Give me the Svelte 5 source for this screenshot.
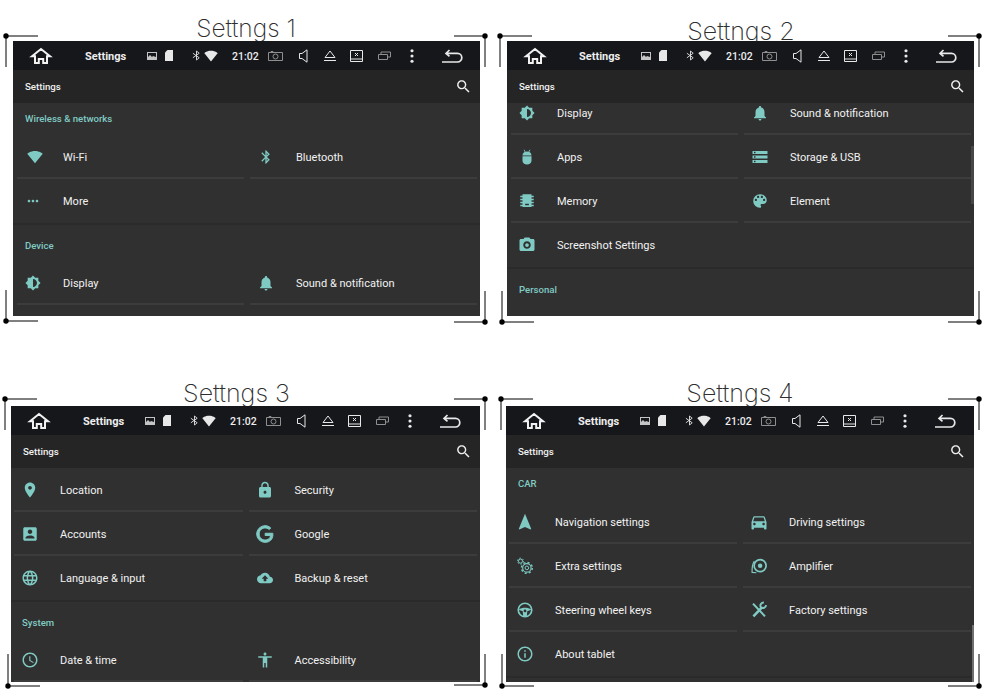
<script>
  const fills = {
    wifi: 'M12.01 21.49L23.64 7c-.45-.34-4.93-4-11.64-4C5.28 3 .81 6.66.36 7l11.63 14.49.01.01.01-.01z',
    bluetooth: 'M17.71 7.71L12 2h-1v7.59L6.41 5 5 6.41 10.59 12 5 17.59 6.41 19 11 14.41V22h1l5.71-5.71-4.3-4.29 4.3-4.29zM13 5.83l1.88 1.88L13 9.59V5.83zm1.88 10.46L13 18.17v-3.76l1.88 1.88z',
    more: 'M6 10c-1.1 0-2 .9-2 2s.9 2 2 2 2-.9 2-2-.9-2-2-2zm12 0c-1.1 0-2 .9-2 2s.9 2 2 2 2-.9 2-2-.9-2-2-2zm-6 0c-1.1 0-2 .9-2 2s.9 2 2 2 2-.9 2-2-.9-2-2-2z',
    display: 'M20 15.31L23.31 12 20 8.69V4h-4.69L12 .69 8.69 4H4v4.69L.69 12 4 15.31V20h4.69L12 23.31 15.31 20H20v-4.69zM12 18V6c3.31 0 6 2.69 6 6s-2.69 6-6 6z',
    bell: 'M12 22c1.1 0 2-.9 2-2h-4c0 1.1.89 2 2 2zm6-6v-5c0-3.07-1.64-5.64-4.5-6.32V4c0-.83-.67-1.5-1.5-1.5s-1.5.67-1.5 1.5v.68C7.63 5.36 6 7.92 6 11v5l-2 2v1h16v-1l-2-2z',
    android: 'M6 11h12v6a6 5 0 0 1-12 0zM6 10a6 5.5 0 0 1 12 0zM7.4 2.2l1 0 1.6 2.6-1 .5zM16.6 2.2l-1 0-1.6 2.6 1 .5z',
    storage: 'M2 20h20v-4H2v4zm2-3h2v2H4v-2zM2 4v4h20V4H2zm4 3H4V5h2v2zm-4 7h20v-4H2v4zm2-3h2v2H4v-2z',
    memory: 'M6 3h12v2h3v2h-3v2h3v2h-3v2h3v2h-3v2h3v2h-3v1H6v-1H3v-2h3v-2H3v-2h3v-2H3V9h3V7H3V5h3zM9.5 15.5v2h5v-2z',
    palette: 'M12 3c-4.97 0-9 4.03-9 9s4.03 9 9 9c.83 0 1.5-.67 1.5-1.5 0-.39-.15-.74-.39-1.01-.23-.26-.38-.61-.38-.99 0-.83.67-1.5 1.5-1.5H16c2.76 0 5-2.24 5-5 0-4.42-4.03-8-9-8zm-5.5 9c-.83 0-1.5-.67-1.5-1.5S5.67 9 6.5 9 8 9.67 8 10.5 7.33 12 6.5 12zm3-4C8.67 8 8 7.33 8 6.5S8.67 5 9.5 5s1.5.67 1.5 1.5S10.33 8 9.5 8zm5 0c-.83 0-1.5-.67-1.5-1.5S13.67 5 14.5 5s1.5.67 1.5 1.5S15.33 8 14.5 8zm3 4c-.83 0-1.5-.67-1.5-1.5S16.67 9 17.5 9s1.5.67 1.5 1.5-.67 1.5-1.5 1.5z',
    camera: 'M9 2L7.17 4H4c-1.1 0-2 .9-2 2v12c0 1.1.9 2 2 2h16c1.1 0 2-.9 2-2V6c0-1.1-.9-2-2-2h-3.17L15 2H9zm3 15c-2.76 0-5-2.24-5-5s2.24-5 5-5 5 2.24 5 5-2.24 5-5 5zM12 9.5a2.5 2.5 0 1 0 0 5 2.5 2.5 0 0 0 0-5z',
    place: 'M12 2C8.13 2 5 5.13 5 9c0 5.25 7 13 7 13s7-7.75 7-13c0-3.87-3.13-7-7-7zm0 9.5c-1.38 0-2.5-1.12-2.5-2.5s1.12-2.5 2.5-2.5 2.5 1.12 2.5 2.5-1.12 2.5-2.5 2.5z',
    lock: 'M18 8h-1V6c0-2.76-2.24-5-5-5S7 3.24 7 6v2H6c-1.1 0-2 .9-2 2v10c0 1.1.9 2 2 2h12c1.1 0 2-.9 2-2V10c0-1.1-.9-2-2-2zm-6 9c-1.1 0-2-.9-2-2s.9-2 2-2 2 .9 2 2-.9 2-2 2zm3.1-9H8.9V6c0-1.71 1.39-3.1 3.1-3.1 1.71 0 3.1 1.39 3.1 3.1v2z',
    account: 'M3 5v14c0 1.1.89 2 2 2h14c1.1 0 2-.9 2-2V5c0-1.1-.9-2-2-2H5c-1.11 0-2 .9-2 2zm12 4c0 1.66-1.34 3-3 3s-3-1.34-3-3 1.34-3 3-3 3 1.34 3 3zm-9 8c0-2 4-3.1 6-3.1s6 1.1 6 3.1v1H6v-1z',
    google: 'M21.35 11.1h-9.17v2.73h6.51c-.33 3.81-3.5 5.44-6.5 5.44C8.36 19.27 5 16.25 5 12c0-4.1 3.2-7.27 7.2-7.27 3.09 0 4.9 1.97 4.9 1.97L19 4.72S16.56 2 12.1 2C6.42 2 2.03 6.8 2.03 12c0 5.05 4.13 10 10.22 10 5.35 0 9.25-3.67 9.25-9.09 0-1.15-.15-1.81-.15-1.81z',
    globe: 'M11.99 2C6.47 2 2 6.48 2 12s4.47 10 9.99 10C17.52 22 22 17.52 22 12S17.52 2 11.99 2zm6.93 6h-2.95c-.32-1.25-.78-2.45-1.38-3.56 1.84.63 3.37 1.91 4.33 3.56zM12 4.04c.83 1.2 1.48 2.53 1.91 3.96h-3.82c.43-1.43 1.08-2.76 1.91-3.96zM4.26 14C4.1 13.36 4 12.69 4 12s.1-1.36.26-2h3.38c-.08.66-.14 1.32-.14 2 0 .68.06 1.34.14 2H4.26zm.82 2h2.95c.32 1.25.78 2.45 1.38 3.56-1.84-.63-3.37-1.9-4.33-3.56zm2.95-8H5.08c.96-1.66 2.49-2.93 4.33-3.56C8.81 5.55 8.35 6.75 8.03 8zM12 19.96c-.83-1.2-1.48-2.53-1.91-3.96h3.82c-.43 1.43-1.08 2.76-1.91 3.96zM14.34 14H9.66c-.09-.66-.16-1.32-.16-2 0-.68.07-1.35.16-2h4.68c.09.65.16 1.32.16 2 0 .68-.07 1.34-.16 2zm.25 5.56c.6-1.11 1.06-2.31 1.38-3.56h2.95c-.96 1.65-2.49 2.93-4.33 3.56zM16.36 14c.08-.66.14-1.32.14-2 0-.68-.06-1.34-.14-2h3.38c.16.64.26 1.31.26 2s-.1 1.36-.26 2h-3.38z',
    cloud: 'M19.35 10.04C18.67 6.59 15.64 4 12 4 9.11 4 6.6 5.64 5.35 8.04 2.34 8.36 0 10.91 0 14c0 3.31 2.69 6 6 6h13c2.76 0 5-2.24 5-5 0-2.64-2.05-4.78-4.65-4.96zM14 13v4h-4v-4H7l5-5 5 5h-3z',
    clock: 'M11.99 2C6.47 2 2 6.48 2 12s4.47 10 9.99 10C17.52 22 22 17.52 22 12S17.52 2 11.99 2zM12 20c-4.42 0-8-3.58-8-8s3.58-8 8-8 8 3.58 8 8-3.58 8-8 8zM12.5 7H11v6l5.25 3.15.75-1.23-4.5-2.67z',
    person: 'M12 2c1.1 0 2 .9 2 2s-.9 2-2 2-2-.9-2-2 .9-2 2-2zm9 7h-6v13h-2v-6h-2v6H9V9H3V7h18v2z',
    nav: 'M12 2L4.5 20.29l.71.71L12 18l6.79 3 .71-.71z',
    car: 'M18.92 6.01C18.72 5.42 18.16 5 17.5 5h-11c-.66 0-1.21.42-1.42 1.01L3 12v8c0 .55.45 1 1 1h1c.55 0 1-.45 1-1v-1h12v1c0 .55.45 1 1 1h1c.55 0 1-.45 1-1v-8l-2.08-5.99zM6.5 16c-.83 0-1.5-.67-1.5-1.5S5.67 13 6.5 13s1.5.67 1.5 1.5S7.33 16 6.5 16zm11 0c-.83 0-1.5-.67-1.5-1.5s.67-1.5 1.5-1.5 1.5.67 1.5 1.5-.67 1.5-1.5 1.5zM5 11l1.5-4.5h11L19 11H5z',
    info: 'M11 17h2v-6h-2v6zm1-15C6.48 2 2 6.48 2 12s4.48 10 10 10 10-4.48 10-10S17.52 2 12 2zm0 18c-4.41 0-8-3.59-8-8s3.59-8 8-8 8 3.59 8 8-3.59 8-8 8zM11 9h2V7h-2v2z'
  };

  const small = ['wifi', 'bluetooth', 'more', 'display', 'cloud'];
  const large = ['nav', 'car', 'google'];
  const sizeOf = (n) => (small.includes(n) ? 'sm' : large.includes(n) ? 'lg' : '');

  const shots = [
    { id: 'a', title: 'Settngs 1', sections: [
      { head: 'Wireless & networks', first: true, rows: [['wifi', 'Wi-Fi'], ['bluetooth', 'Bluetooth'], ['more', 'More'], null] },
      { head: 'Device', open: true, rows: [['display', 'Display'], ['bell', 'Sound & notification']] }
    ] },
    { id: 'b', title: 'Settngs 2', sections: [
      { rows: [['display', 'Display'], ['bell', 'Sound & notification'], ['android', 'Apps'], ['storage', 'Storage & USB'], ['memory', 'Memory'], ['palette', 'Element'], ['camera', 'Screenshot Settings'], null] },
      { head: 'Personal', open: true, rows: [] }
    ] },
    { id: 'c', title: 'Settngs 3', sections: [
      { rows: [['place', 'Location'], ['lock', 'Security'], ['account', 'Accounts'], ['google', 'Google'], ['globe', 'Language & input'], ['cloud', 'Backup & reset']] },
      { head: 'System', open: true, rows: [['clock', 'Date & time'], ['person', 'Accessibility']] }
    ] },
    { id: 'd', title: 'Settngs 4', sections: [
      { head: 'CAR', first: true, rows: [['nav', 'Navigation settings'], ['car', 'Driving settings'], ['gears', 'Extra settings'], ['amp', 'Amplifier'], ['wheel', 'Steering wheel keys'], ['tools', 'Factory settings'], ['info', 'About tablet'], null] }
    ] }
  ];

  const lastRowStart = (s) => s.open ? s.rows.length : s.rows.length - 2;

  const marks = [
    [6, 36, 38, 67], [485, 36, 454, 67], [6, 321, 38, 290], [485, 322, 454, 291],
    [500, 36, 532, 67], [979, 36, 948, 67], [502, 322, 534, 291], [979, 322, 948, 291],
    [5, 399, 37, 430], [485, 399, 454, 430], [8, 686, 40, 654], [485, 685, 454, 654],
    [501, 399, 533, 430], [979, 399, 948, 430], [502, 686, 534, 654], [979, 686, 948, 654]
  ];
</script>

{#snippet icon(name)}
  <svg class="ic {sizeOf(name)} {name}" viewBox="0 0 24 24">
    {#if fills[name]}
      <path d={fills[name]} fill-rule="evenodd" />
    {:else if name === 'gears'}
      <g class="st">
        <circle cx="14.5" cy="14.5" r="5.6" stroke-width="1.5" />
        <circle cx="14.5" cy="14.5" r="2.4" stroke-width="1.3" />
        <circle cx="14.5" cy="14.5" r="7.2" stroke-width="1.9" stroke-dasharray="2.8 2.85" />
        <circle cx="6" cy="5.5" r="2.7" stroke-width="1.3" />
        <circle cx="6" cy="5.5" r="4" stroke-width="1.3" stroke-dasharray="2 2.2" />
      </g>
    {:else if name === 'amp'}
      <g class="st">
        <circle cx="13.5" cy="11.5" r="8" stroke-width="2.3" />
        <circle cx="13.5" cy="11.5" r="3" stroke-width="0" class="solid" />
        <path d="M5.8 5.5C2.8 10 2.6 15 2.8 20.5L8.5 21" stroke-width="1.6" />
      </g>
    {:else if name === 'wheel'}
      <g class="st">
        <circle cx="12" cy="12" r="9" stroke-width="2.2" />
        <path d="M3.5 11.5C8 8 16 8 20.5 11.5L15 13.5 14.5 20h-5L9 13.5z" class="solid" stroke-width="0" />
        <circle cx="12" cy="13.2" r="1.9" class="hole" stroke-width="0" />
      </g>
    {:else if name === 'tools'}
      <g class="st">
        <path d="M4 3.5L20 20.5" stroke-width="2.8" />
        <path d="M16 8.5L4.5 20.5" stroke-width="3.4" />
        <path d="M21.5 5.5a4.4 4.4 0 0 1-7 3 4.4 4.4 0 0 1 4-6.6" stroke-width="2.6" />
      </g>
    {/if}
  </svg>
{/snippet}

{#snippet statusbar()}
  <div class="bar">
    <svg class="home" viewBox="0 0 20 16"><path d="M1 8.2L10 1l9 7.2h-3V15h-3.8v-4H7.8v4H4V8.2z" /></svg>
    <span class="bar-title">Settings</span>
    <svg class="pic" viewBox="0 0 10 10"><path class="fl soft" fill-rule="evenodd" d="M0 1h10v8H0zM1 2v4l2-2 2 2 1-1 3 1V2z" /></svg>
    <svg class="sd" viewBox="0 0 8 11"><path class="fl" d="M2.5 0H8v11H0V2.5z" /></svg>
    <svg class="bt" viewBox="0 0 10 12"><path class="ln" d="M1 3.5L8 8.5 5 11V1L8 3.5 1 8.5" /></svg>
    <svg class="wifi" viewBox="0 0 24 24"><path class="fl" d={fills.wifi} /></svg>
    <span class="time">21:02</span>
    <svg class="cam" viewBox="0 0 15 10"><path class="ln dim" d="M.5 1.5h14v8H.5zM3 1.5v-1h2v1" /><circle class="ln dim" cx="7.5" cy="5.5" r="2.5" /></svg>
    <svg class="speaker" viewBox="0 0 9 14"><path class="ln" d="M.5 4.5H3L8 .8v12.4L3 9.5H.5z" /></svg>
    <svg class="eject" viewBox="0 0 12 12"><path class="ln" d="M6 1l5 6.5H1z" /><path class="ln" d="M0 10.5h12" /></svg>
    <svg class="xbox" viewBox="0 0 13 12"><path class="ln" d="M.5.5h12v11H.5zM.5 9h12M5 3l3 3M8 3L5 6" /></svg>
    <svg class="win" viewBox="0 0 13 9"><path class="ln dim" d="M.5 3.5h9v5h-9zM3 3.5V1h9.5v5H9.5" /></svg>
    <svg class="dots" viewBox="0 0 4 16"><circle class="fl" cx="2" cy="2" r="1.8" /><circle class="fl" cx="2" cy="8" r="1.8" /><circle class="fl" cx="2" cy="14" r="1.8" /></svg>
    <svg class="back" viewBox="0 0 20 14"><path class="ln thick" d="M0 13h15.5a4.2 4.2 0 0 0 0-8.6H4M7.5 1L4 4.4l3.5 3" /></svg>
  </div>
{/snippet}

<div class="page">
  {#each shots as s}
    <section class="shot {s.id}">
      <h2>{s.title}</h2>
      <div class="screen">
        {@render statusbar()}
        <div class="appbar">
          <span>Settings</span>
          <svg viewBox="0 0 24 24"><path d="M15.5 14h-.79l-.28-.27C15.41 12.59 16 11.11 16 9.5 16 5.91 13.09 3 9.5 3S3 5.91 3 9.5 5.91 16 9.5 16c1.61 0 3.09-.59 4.23-1.57l.27.28v.79l5 4.99L20.49 19l-4.99-5zm-6 0C7.01 14 5 11.99 5 9.5S7.01 5 9.5 5 14 7.01 14 9.5 11.99 14 9.5 14z" /></svg>
        </div>
        <div class="content">
          {#each s.sections as sec}
            <div class="sec" class:open={sec.open}>
              {#if sec.head}<div class="head" class:first={sec.first}>{sec.head}</div>{/if}
              {#if sec.rows.length}
                <div class="cells">
                  {#each sec.rows as cell, i}
                    <div class="cell" class:last={i >= lastRowStart(sec)}>
                      {#if cell}
                        <span class="slot">{@render icon(cell[0])}</span>
                        <span class="label">{cell[1]}</span>
                      {/if}
                    </div>
                  {/each}
                </div>
              {/if}
            </div>
          {/each}
        </div>
        <div class="thumb"></div>
      </div>
    </section>
  {/each}

  <svg class="marks" viewBox="0 0 990 698">
    {#each marks as [x, y, hx, vy]}
      <path d="M{x} {y}H{hx}M{x} {y}V{vy}" />
      <circle cx={x} cy={y} r="2.7" />
    {/each}
  </svg>
</div>

<style>
  :global(body) { margin: 0; background: #fff; }
  .page {
    position: relative;
    width: 990px;
    height: 698px;
    display: grid;
    grid-template-columns: 495px 495px;
    grid-template-rows: 365px 333px;
    overflow: hidden;
    font-family: Roboto, "Liberation Sans", sans-serif;
  }
  .shot { min-width: 0; }
  h2 {
    margin: 0;
    height: 41px;
    box-sizing: border-box;
    padding-top: 13px;
    font: 200 25px/30px Inter, "Liberation Sans", sans-serif;
    color: #2e2e2e;
    text-align: center;
    white-space: nowrap;
  }
  .a h2 { font-size: 24.5px; margin-right: 3px; }
  .b h2 { padding-top: 16px; margin-left: -3px; }
  .c h2 { margin-right: 22px; }
  .d h2 { margin-left: -5px; }

  .screen {
    position: relative;
    margin-left: 13px;
    width: 467px;
    height: 275px;
    background: #303030;
    overflow: hidden;
    display: flex;
    flex-direction: column;
    --pad: 4px;
    --gap: 6px;
  }
  .b .screen { margin-left: 12px; }
  .c .screen { margin-left: 11px; width: 469px; height: 276px; --pad: 3px; --gap: 6px; }
  .d .screen { margin-left: 11px; width: 468px; height: 276px; --pad: 3px; }

  .bar {
    flex: none;
    height: 29px;
    background: #15171b;
    display: flex;
    align-items: center;
    color: #eee;
  }
  .bar svg { flex: none; display: block; overflow: visible; }
  .fl { fill: #e8e8e8; }
  .fl.soft { fill: #c4c4c4; }
  .ln { fill: none; stroke: #e8e8e8; stroke-width: 1; }
  .ln.dim { stroke: #8f8f8f; }
  .ln.thick { stroke-width: 1.7; }
  .home { margin-left: 18px; width: 20px; height: 16px; fill: none; stroke: #f2f2f2; stroke-width: 2; }
  .bar-title { margin-left: 34px; width: 41px; padding-top: 1px; font-size: 11px; font-weight: 700; white-space: nowrap; }
  .pic { margin-left: 21px; width: 10px; height: 10px; }
  .sd { margin-left: 8px; width: 8px; height: 11px; }
  .bt { margin-left: 19px; width: 9px; height: 11px; }
  .wifi { margin-left: 3px; width: 14px; height: 14px; }
  .time { margin-left: 14px; width: 23px; padding-top: 1px; font-size: 10.5px; font-weight: 500; white-space: nowrap; }
  .cam { margin-left: 13px; width: 15px; height: 10px; }
  .speaker { margin-left: 16px; width: 9px; height: 14px; }
  .eject { margin-left: 16px; width: 12px; height: 12px; }
  .xbox { margin-left: 14px; width: 13px; height: 12px; }
  .win { margin-left: 15px; width: 13px; height: 9px; }
  .dots { margin-left: 19px; width: 4px; height: 14px; }
  .back { margin-left: 28px; width: 20px; height: 14px; }

  .appbar {
    flex: none;
    position: relative;
    z-index: 1;
    height: 33px;
    background: #252525;
    display: flex;
    align-items: center;
    justify-content: space-between;
    padding: 0 8px 0 12px;
    color: #f0f0f0;
    font-size: 9.7px;
    font-weight: 500;
  }
  .appbar svg { width: 17px; height: 17px; fill: #f0f0f0; }

  .content { flex: 1; min-height: 0; }
  .b .content { margin-top: -12px; }
  .sec { border-bottom: 2px solid #2a2a2a; }
  .sec.open { border-bottom: 0; }
  .head {
    height: 36px;
    box-sizing: border-box;
    padding: 15px 0 0 12px;
    color: #80cbc4;
    font-size: 9.6px;
    font-weight: 500;
    line-height: 12px;
  }
  .c .head { padding-left: 11px; }
  .head.first { height: 32px; padding-top: 10px; }
  .cells {
    display: grid;
    grid-template-columns: 1fr 1fr;
    column-gap: var(--gap);
    padding: 0 3px 0 var(--pad);
  }
  .cell {
    height: 44px;
    box-sizing: border-box;
    display: flex;
    align-items: center;
    border-bottom: 2px solid #3c3c3c;
    padding-top: 2px;
  }
  .cell.last { border-bottom-color: transparent; }
  .slot { flex: none; width: 32px; display: flex; justify-content: center; }
  .label { margin-left: 14px; color: #f2f2f2; font-size: 11px; white-space: nowrap; }
  .ic { width: 18px; height: 18px; fill: #7fcac3; overflow: visible; }
  .ic.sm { width: 16px; height: 16px; }
  .ic.lg { width: 20px; height: 20px; }
  .ic.google { stroke: #7fcac3; stroke-width: 1.2; }
  .st { fill: none; stroke: #7fcac3; }
  .st .solid { fill: #7fcac3; }
  .st .hole { fill: #303030; }

  .thumb { display: none; position: absolute; right: 0; width: 3px; }
  .b .thumb { display: block; top: 105px; height: 58px; background: #474747; }
  .d .thumb { display: block; top: 219px; height: 57px; width: 2.5px; background: #6f6f6f; }

  .marks { position: absolute; inset: 0; width: 990px; height: 698px; pointer-events: none; }
  .marks path { fill: none; stroke: #000; stroke-width: 1; }
  .marks circle { fill: #000; }
</style>
